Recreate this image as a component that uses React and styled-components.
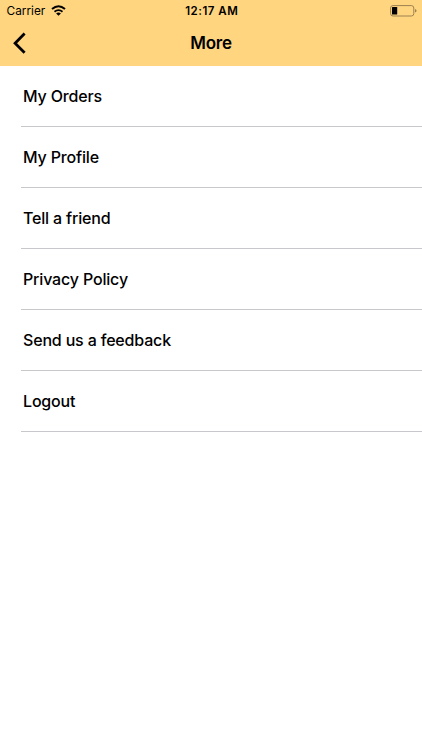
import React from 'react';
import styled, { createGlobalStyle } from 'styled-components';

const items = [
	'My Orders',
	'My Profile',
	'Tell a friend',
	'Privacy Policy',
	'Send us a feedback',
	'Logout',
];

const App = () => {
	return (
		<Screen>
			<GlobalStyle />
			<Header>
				<StatusBar>
					<Carrier>
						<span>Carrier</span>
						<WifiIcon />
					</Carrier>
					<Time>12:17 AM</Time>
					<BatteryIcon />
				</StatusBar>
				<NavBar>
					<BackButton aria-label="Back">
						<BackIcon />
					</BackButton>
					<Title>More</Title>
				</NavBar>
			</Header>
			<Menu>
				{items.map((item) => (
					<MenuItem key={item}>{item}</MenuItem>
				))}
			</Menu>
		</Screen>
	);
};

const WifiIcon = () => (
	<svg width="15" height="11" viewBox="0 0 15 11" fill="none" stroke="#000">
		<path d="M1 4.1 Q7.5 -1.5 14 4.1" strokeWidth="2" />
		<path d="M3.5 6.8 Q7.5 3.4 11.5 6.8" strokeWidth="1.8" />
		<path d="M7.5 10.7 L5.1 8.5 Q7.5 6.7 9.9 8.5 Z" fill="#000" stroke="none" />
	</svg>
);

const BatteryIcon = () => (
	<svg width="27" height="12" viewBox="0 0 27 12">
		<rect x="0.6" y="0.6" width="23.2" height="10.4" rx="2.4" fill="none" stroke="#9c8150" />
		<rect x="2" y="2" width="5.2" height="7.6" rx="0.6" fill="#000" />
		<path d="M25 4 Q26.6 4.5 26.6 5.8 Q26.6 7.1 25 7.6 Z" fill="#9c8150" />
	</svg>
);

const BackIcon = () => (
	<svg width="14" height="22" viewBox="0 0 14 22" fill="none">
		<path d="M12.6 1.6 L3.1 11.2 L12.6 20.8" stroke="#000" strokeWidth="2.8" />
	</svg>
);

const GlobalStyle = createGlobalStyle`
body {
	margin: 0;
	background: #fff;
}
`;
const Screen = styled.div`
min-height: 100vh;
background: #fff;
color: #000;
font-family: Inter, "Liberation Sans", sans-serif;
`;
const Header = styled.header`
height: 65.5px;
background: #ffd580;
`;
const StatusBar = styled.div`
display: grid;
grid-template-columns: 1fr auto 1fr;
align-items: center;
height: 22px;
padding: 0 5px 0 6.5px;
svg:last-child {
	justify-self: end;
}
`;
const Carrier = styled.div`
display: flex;
align-items: center;
gap: 6px;
font-size: 11.8px;
line-height: 14px;
letter-spacing: 0.02px;
svg {
	display: block;
	margin-bottom: 2px;
}
`;
const Time = styled.span`
font-size: 11.5px;
font-weight: 600;
letter-spacing: 0.5px;
`;
const NavBar = styled.div`
display: grid;
grid-template-columns: 40px 1fr 40px;
align-items: center;
height: 42px;
`;
const BackButton = styled.button`
display: flex;
margin: 0;
padding: 0 0 0 12px;
border: 0;
background: none;
`;
const Title = styled.h1`
margin: 0;
font-size: 17px;
font-weight: 600;
line-height: 20px;
letter-spacing: -0.2px;
text-align: center;
`;
const Menu = styled.ul`
margin: 0;
padding: 0 0 0 21px;
list-style: none;
`;
const MenuItem = styled.li`
box-sizing: border-box;
display: flex;
align-items: center;
height: 61.1px;
padding-left: 2px;
border-bottom: 1px solid #c8c7cc;
font-size: 16px;
font-weight: 500;
letter-spacing: -0.17px;
`;
export default App;
